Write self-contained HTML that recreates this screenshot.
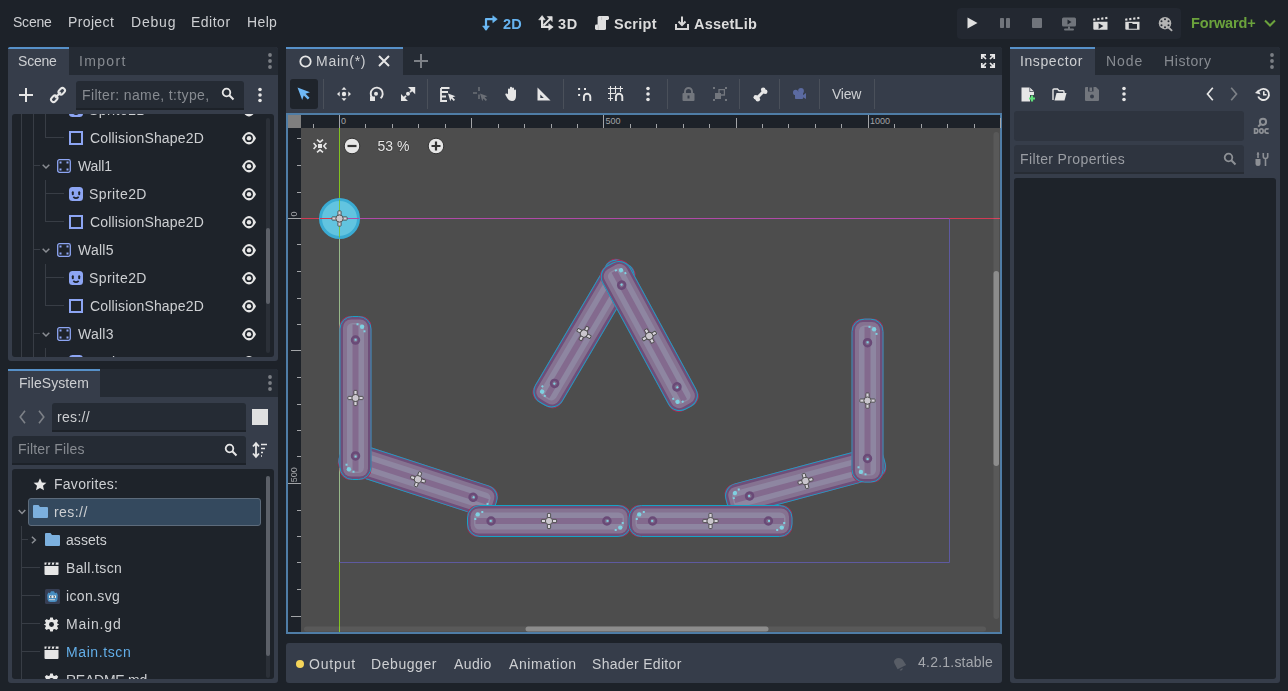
<!DOCTYPE html>
<html><head><meta charset="utf-8">
<style>
*{margin:0;padding:0;box-sizing:border-box}
html,body{width:1288px;height:691px;overflow:hidden;background:#1d2229;font-family:"Liberation Sans",sans-serif;font-size:14px;color:#cdcfd2}
.a{position:absolute}
.t{position:absolute;white-space:nowrap;line-height:1;will-change:transform}
.dim{color:#878b91}
svg{position:absolute;overflow:visible}
</style></head><body>

<!-- ===== top menu ===== -->
<div class="t" style="left:13.30px;top:15.25px;letter-spacing:-0.225px">Scene</div>
<div class="t" style="left:68.30px;top:15.25px;letter-spacing:0.367px">Project</div>
<div class="t" style="left:130.50px;top:15.25px;letter-spacing:0.800px">Debug</div>
<div class="t" style="left:190.50px;top:15.25px;letter-spacing:0.500px">Editor</div>
<div class="t" style="left:246.70px;top:15.25px;letter-spacing:0.367px">Help</div>


<!-- top center buttons -->
<svg style="left:480px;top:13px" width="20" height="20" viewBox="0 0 20 20"><path d="M6 17V6.2H15" fill="none" stroke="#6ab8f4" stroke-width="2.2" stroke-linejoin="round"/><path d="M12.8 2.7L17.3 6.2L12.8 9.7Z M2.6 13L6 17.4L9.4 13Z" fill="#6ab8f4" stroke="#6ab8f4" stroke-width="0.6" stroke-linejoin="round"/></svg>
<div class="t" style="left:502.60px;top:16.73px;font-weight:bold;color:#66b3f0;font-size:14.5px;letter-spacing:0.200px">2D</div>
<svg style="left:536px;top:13px" width="20" height="20" viewBox="0 0 20 20"><path d="M6.1 6V13.9H15" fill="none" stroke="#e0e0e0" stroke-width="2.2"/><path d="M7.5 12.5L14.2 5.8" stroke="#e0e0e0" stroke-width="2"/><path d="M2.7 6.8L6.1 2.6L9.2 6.8Z M12.8 10.7L17.2 14L12.8 17.2Z M11.2 3.6H16.2V8.6Z" fill="#e0e0e0" stroke="#e0e0e0" stroke-width="0.6" stroke-linejoin="round"/></svg>
<div class="t" style="left:558.00px;top:16.73px;font-weight:bold;color:#dcdcdc;font-size:14.5px;letter-spacing:0.700px">3D</div>
<svg style="left:594px;top:15px" width="16" height="16" viewBox="0 0 16 16"><rect x="3.6" y="1" width="8.4" height="14" rx="1.6" fill="#e0e0e0"/><rect x="7" y="1" width="8" height="4" rx="1.4" fill="#e0e0e0"/><rect x="1" y="9.6" width="7" height="5.4" rx="1.4" fill="#e0e0e0"/><path d="M7.6 1.8V5M4.3 10.2V15" stroke="#b8b8b8" stroke-width="0.7"/></svg>
<div class="t" style="left:614.40px;top:16.73px;font-weight:bold;color:#dcdcdc;font-size:14.5px;letter-spacing:0.280px">Script</div>
<svg style="left:674px;top:15px" width="16" height="16" viewBox="0 0 16 16">
 <path d="M2 9V14H14V9" fill="none" stroke="#d6d6d6" stroke-width="2"/>
 <path d="M8 1.5V10M4.5 6.5L8 10L11.5 6.5" fill="none" stroke="#d6d6d6" stroke-width="2"/>
</svg>
<div class="t" style="left:694.00px;top:16.73px;font-weight:bold;color:#dcdcdc;font-size:14.5px;letter-spacing:0.214px">AssetLib</div>

<!-- play panel -->
<div class="a" style="left:957px;top:8px;width:224px;height:31px;background:#232831;border-radius:4px"></div>
<svg style="left:967px;top:17px" width="11" height="12" viewBox="0 0 11 12"><path d="M0.5 0.5L10.5 6L0.5 11.5Z" fill="#e0e0e0"/></svg>
<svg style="left:1000px;top:18px" width="10" height="10" viewBox="0 0 10 10"><rect x="0" y="0" width="4" height="10" rx="0.8" fill="#70747b"/><rect x="6" y="0" width="4" height="10" rx="0.8" fill="#70747b"/></svg>
<svg style="left:1032px;top:18px" width="10" height="10" viewBox="0 0 10 10"><rect x="0" y="0" width="10" height="10" rx="1" fill="#70747b"/></svg>
<svg style="left:1061px;top:17px" width="16" height="14" viewBox="0 0 16 14"><path d="M1 2Q1 0.5 2.5 0.5H13.5Q15 0.5 15 2V8Q15 9.5 13.5 9.5H2.5Q1 9.5 1 8Z" fill="#70747b"/><path d="M6.5 2.5L10.5 5L6.5 7.5Z" fill="#232831"/><rect x="7" y="9.5" width="2" height="2.5" fill="#70747b"/><rect x="3" y="11.5" width="10" height="2" rx="1" fill="#70747b"/></svg>
<svg style="left:1093px;top:16px" width="16" height="15" viewBox="0 0 16 15"><path d="M0.3 5.8H14.5V13.8H1.3Q0.3 13.8 0.3 12.8Z" fill="#dcdcdc"/><g fill="#dcdcdc"><rect x="0.2" y="2.5" width="2.2" height="2.2" transform="rotate(-8 1.3 3.6)"/><rect x="4.2" y="2" width="2.2" height="2.2" transform="rotate(-8 5.3 3.1)"/><rect x="8.2" y="1.5" width="2.2" height="2.2" transform="rotate(-8 9.3 2.6)"/><rect x="12.2" y="1" width="2.2" height="2.2" transform="rotate(-8 13.3 2.1)"/></g><path d="M5.6 7.2L10.4 10.1L5.6 13Z" fill="#232831"/></svg>
<svg style="left:1125px;top:16px" width="16" height="15" viewBox="0 0 16 15"><path d="M0.3 5.8H14.5V13.8H1.3Q0.3 13.8 0.3 12.8Z" fill="#dcdcdc"/><g fill="#dcdcdc"><rect x="0.2" y="2.5" width="2.2" height="2.2" transform="rotate(-8 1.3 3.6)"/><rect x="4.2" y="2" width="2.2" height="2.2" transform="rotate(-8 5.3 3.1)"/><rect x="8.2" y="1.5" width="2.2" height="2.2" transform="rotate(-8 9.3 2.6)"/><rect x="12.2" y="1" width="2.2" height="2.2" transform="rotate(-8 13.3 2.1)"/></g><path d="M3.8 7H7L7.8 8.1H12V12.8H3.8Z" fill="#232831"/></svg>
<svg style="left:1158px;top:16px" width="16" height="16" viewBox="0 0 16 16"><circle cx="7" cy="7.2" r="6.2" fill="#b4b4b4"/><g fill="#232831"><circle cx="7" cy="3.2" r="1"/><circle cx="7" cy="11.2" r="1"/><circle cx="3.5" cy="5.2" r="1"/><circle cx="3.5" cy="9.2" r="1"/><circle cx="10.5" cy="5.2" r="1"/><circle cx="10.5" cy="9.2" r="1"/></g><path d="M10.5 11.5L13.6 14.4" stroke="#b4b4b4" stroke-width="1.8" stroke-linecap="round"/></svg>
<div class="t" style="left:1190.90px;top:15.73px;font-weight:bold;color:#6ba23c;font-size:14.5px;letter-spacing:-0.129px">Forward+</div>
<svg style="left:1264px;top:19px" width="12" height="8" viewBox="0 0 12 8"><path d="M1 1.5L6 6.5L11 1.5" fill="none" stroke="#6ba23c" stroke-width="2"/></svg>

<!-- ===== left top panel (Scene) ===== -->
<div class="a" style="left:8px;top:47px;width:270px;height:314px;background:#363d4a;border-radius:3px"></div>
<div class="a" style="left:69px;top:47px;width:209px;height:28px;background:#252b34;border-top-right-radius:3px"></div>
<div class="a" style="left:8px;top:47px;width:61px;height:2px;background:#5791c9;border-top-left-radius:2px"></div>
<div class="t" style="left:18.10px;top:54.25px;letter-spacing:-0.200px">Scene</div>
<div class="t dim" style="left:79.05px;top:54.25px;letter-spacing:1.330px">Import</div>

<!-- filter -->
<div class="a" style="left:76px;top:81px;width:168px;height:29px;background:#252b34;border-bottom:2px solid #1d2229;border-radius:3px 3px 0 0"></div>
<div class="t dim" style="left:81.70px;top:87.95px;letter-spacing:0.365px">Filter: name, t:type,</div>

<!-- tree -->
<div class="a" style="left:12px;top:114px;width:262px;height:243px;background:#1e232a;border-radius:3px"></div>
<div class="a" style="left:12px;top:114px;width:262px;height:243px;overflow:hidden;border-radius:3px">
<div style="position:absolute;left:-12px;top:-114px;width:300px;height:400px">
<div class="a" style="left:21px;top:114px;width:1px;height:243px;background:#383d45"></div>
<div class="a" style="left:33px;top:114px;width:1px;height:243px;background:#383d45"></div>
<div class="a" style="left:45px;top:109px;width:19px;height:1px;background:#383d45"></div>
<svg style="left:69px;top:103px" width="14" height="14" viewBox="0 0 14 14"><rect x="0" y="0" width="14" height="14" rx="3.5" fill="#8da5f3"/><rect x="2.8" y="4.2" width="2" height="4" rx="1" fill="#1e232a"/><rect x="9.2" y="4.2" width="2" height="4" rx="1" fill="#1e232a"/><path d="M4.3 9.8Q7 12.4 9.7 9.8" fill="none" stroke="#1e232a" stroke-width="1.7"/></svg>
<div class="t " style="left:89.40px;top:103.15px;letter-spacing:0.429px">Sprite2D</div>
<svg style="left:242px;top:104px" width="14" height="13" viewBox="0 0 14 13"><path d="M0 6.2C1.8 2.4 4.3 0 7 0C9.7 0 12.2 2.4 14 6.2C12.2 9.9 9.7 12.4 7 12.4C4.3 12.4 1.8 9.9 0 6.2Z" fill="#e6e6e6"/><circle cx="7" cy="6.2" r="3.9" fill="#1e232a"/><circle cx="7" cy="6.2" r="2.2" fill="#e6e6e6"/></svg>
<div class="a" style="left:45px;top:137px;width:19px;height:1px;background:#383d45"></div>
<svg style="left:69px;top:131px" width="14" height="14" viewBox="0 0 14 14"><rect x="1" y="1" width="12" height="12" fill="none" stroke="#8da5f3" stroke-width="2"/></svg>
<div class="t " style="left:90.40px;top:131.15px;letter-spacing:0.167px">CollisionShape2D</div>
<svg style="left:242px;top:132px" width="14" height="13" viewBox="0 0 14 13"><path d="M0 6.2C1.8 2.4 4.3 0 7 0C9.7 0 12.2 2.4 14 6.2C12.2 9.9 9.7 12.4 7 12.4C4.3 12.4 1.8 9.9 0 6.2Z" fill="#e6e6e6"/><circle cx="7" cy="6.2" r="3.9" fill="#1e232a"/><circle cx="7" cy="6.2" r="2.2" fill="#e6e6e6"/></svg>
<div class="a" style="left:33px;top:165px;width:7px;height:1px;background:#383d45"></div>
<svg style="left:42px;top:164px" width="8" height="5" viewBox="0 0 8 5"><path d="M0.7 0.7L4 4L7.3 0.7" fill="none" stroke="#8a8d93" stroke-width="1.5"/></svg>
<svg style="left:57px;top:159px" width="14" height="14" viewBox="0 0 14 14"><rect x="0.7" y="0.7" width="12.6" height="12.6" rx="1.8" fill="none" stroke="#8da5f3" stroke-width="1.3"/><rect x="2.5" y="2.5" width="2" height="2" fill="#8da5f3"/><rect x="9.5" y="2.5" width="2" height="2" fill="#8da5f3"/><rect x="2.5" y="9.5" width="2" height="2" fill="#8da5f3"/><rect x="9.5" y="9.5" width="2" height="2" fill="#8da5f3"/></svg>
<div class="t " style="left:78.30px;top:159.45px;letter-spacing:-0.125px">Wall1</div>
<div class="a" style="left:45px;top:180px;width:1px;height:42px;background:#383d45"></div>
<svg style="left:242px;top:160px" width="14" height="13" viewBox="0 0 14 13"><path d="M0 6.2C1.8 2.4 4.3 0 7 0C9.7 0 12.2 2.4 14 6.2C12.2 9.9 9.7 12.4 7 12.4C4.3 12.4 1.8 9.9 0 6.2Z" fill="#e6e6e6"/><circle cx="7" cy="6.2" r="3.9" fill="#1e232a"/><circle cx="7" cy="6.2" r="2.2" fill="#e6e6e6"/></svg>
<div class="a" style="left:45px;top:193px;width:19px;height:1px;background:#383d45"></div>
<svg style="left:69px;top:187px" width="14" height="14" viewBox="0 0 14 14"><rect x="0" y="0" width="14" height="14" rx="3.5" fill="#8da5f3"/><rect x="2.8" y="4.2" width="2" height="4" rx="1" fill="#1e232a"/><rect x="9.2" y="4.2" width="2" height="4" rx="1" fill="#1e232a"/><path d="M4.3 9.8Q7 12.4 9.7 9.8" fill="none" stroke="#1e232a" stroke-width="1.7"/></svg>
<div class="t " style="left:89.40px;top:187.15px;letter-spacing:0.429px">Sprite2D</div>
<svg style="left:242px;top:188px" width="14" height="13" viewBox="0 0 14 13"><path d="M0 6.2C1.8 2.4 4.3 0 7 0C9.7 0 12.2 2.4 14 6.2C12.2 9.9 9.7 12.4 7 12.4C4.3 12.4 1.8 9.9 0 6.2Z" fill="#e6e6e6"/><circle cx="7" cy="6.2" r="3.9" fill="#1e232a"/><circle cx="7" cy="6.2" r="2.2" fill="#e6e6e6"/></svg>
<div class="a" style="left:45px;top:221px;width:19px;height:1px;background:#383d45"></div>
<svg style="left:69px;top:215px" width="14" height="14" viewBox="0 0 14 14"><rect x="1" y="1" width="12" height="12" fill="none" stroke="#8da5f3" stroke-width="2"/></svg>
<div class="t " style="left:90.40px;top:215.15px;letter-spacing:0.167px">CollisionShape2D</div>
<svg style="left:242px;top:216px" width="14" height="13" viewBox="0 0 14 13"><path d="M0 6.2C1.8 2.4 4.3 0 7 0C9.7 0 12.2 2.4 14 6.2C12.2 9.9 9.7 12.4 7 12.4C4.3 12.4 1.8 9.9 0 6.2Z" fill="#e6e6e6"/><circle cx="7" cy="6.2" r="3.9" fill="#1e232a"/><circle cx="7" cy="6.2" r="2.2" fill="#e6e6e6"/></svg>
<div class="a" style="left:33px;top:249px;width:7px;height:1px;background:#383d45"></div>
<svg style="left:42px;top:248px" width="8" height="5" viewBox="0 0 8 5"><path d="M0.7 0.7L4 4L7.3 0.7" fill="none" stroke="#8a8d93" stroke-width="1.5"/></svg>
<svg style="left:57px;top:243px" width="14" height="14" viewBox="0 0 14 14"><rect x="0.7" y="0.7" width="12.6" height="12.6" rx="1.8" fill="none" stroke="#8da5f3" stroke-width="1.3"/><rect x="2.5" y="2.5" width="2" height="2" fill="#8da5f3"/><rect x="9.5" y="2.5" width="2" height="2" fill="#8da5f3"/><rect x="2.5" y="9.5" width="2" height="2" fill="#8da5f3"/><rect x="9.5" y="9.5" width="2" height="2" fill="#8da5f3"/></svg>
<div class="t " style="left:78.30px;top:243.45px;letter-spacing:0.250px">Wall5</div>
<div class="a" style="left:45px;top:264px;width:1px;height:42px;background:#383d45"></div>
<svg style="left:242px;top:244px" width="14" height="13" viewBox="0 0 14 13"><path d="M0 6.2C1.8 2.4 4.3 0 7 0C9.7 0 12.2 2.4 14 6.2C12.2 9.9 9.7 12.4 7 12.4C4.3 12.4 1.8 9.9 0 6.2Z" fill="#e6e6e6"/><circle cx="7" cy="6.2" r="3.9" fill="#1e232a"/><circle cx="7" cy="6.2" r="2.2" fill="#e6e6e6"/></svg>
<div class="a" style="left:45px;top:277px;width:19px;height:1px;background:#383d45"></div>
<svg style="left:69px;top:271px" width="14" height="14" viewBox="0 0 14 14"><rect x="0" y="0" width="14" height="14" rx="3.5" fill="#8da5f3"/><rect x="2.8" y="4.2" width="2" height="4" rx="1" fill="#1e232a"/><rect x="9.2" y="4.2" width="2" height="4" rx="1" fill="#1e232a"/><path d="M4.3 9.8Q7 12.4 9.7 9.8" fill="none" stroke="#1e232a" stroke-width="1.7"/></svg>
<div class="t " style="left:89.40px;top:271.15px;letter-spacing:0.429px">Sprite2D</div>
<svg style="left:242px;top:272px" width="14" height="13" viewBox="0 0 14 13"><path d="M0 6.2C1.8 2.4 4.3 0 7 0C9.7 0 12.2 2.4 14 6.2C12.2 9.9 9.7 12.4 7 12.4C4.3 12.4 1.8 9.9 0 6.2Z" fill="#e6e6e6"/><circle cx="7" cy="6.2" r="3.9" fill="#1e232a"/><circle cx="7" cy="6.2" r="2.2" fill="#e6e6e6"/></svg>
<div class="a" style="left:45px;top:305px;width:19px;height:1px;background:#383d45"></div>
<svg style="left:69px;top:299px" width="14" height="14" viewBox="0 0 14 14"><rect x="1" y="1" width="12" height="12" fill="none" stroke="#8da5f3" stroke-width="2"/></svg>
<div class="t " style="left:90.40px;top:299.15px;letter-spacing:0.167px">CollisionShape2D</div>
<svg style="left:242px;top:300px" width="14" height="13" viewBox="0 0 14 13"><path d="M0 6.2C1.8 2.4 4.3 0 7 0C9.7 0 12.2 2.4 14 6.2C12.2 9.9 9.7 12.4 7 12.4C4.3 12.4 1.8 9.9 0 6.2Z" fill="#e6e6e6"/><circle cx="7" cy="6.2" r="3.9" fill="#1e232a"/><circle cx="7" cy="6.2" r="2.2" fill="#e6e6e6"/></svg>
<div class="a" style="left:33px;top:333px;width:7px;height:1px;background:#383d45"></div>
<svg style="left:42px;top:332px" width="8" height="5" viewBox="0 0 8 5"><path d="M0.7 0.7L4 4L7.3 0.7" fill="none" stroke="#8a8d93" stroke-width="1.5"/></svg>
<svg style="left:57px;top:327px" width="14" height="14" viewBox="0 0 14 14"><rect x="0.7" y="0.7" width="12.6" height="12.6" rx="1.8" fill="none" stroke="#8da5f3" stroke-width="1.3"/><rect x="2.5" y="2.5" width="2" height="2" fill="#8da5f3"/><rect x="9.5" y="2.5" width="2" height="2" fill="#8da5f3"/><rect x="2.5" y="9.5" width="2" height="2" fill="#8da5f3"/><rect x="9.5" y="9.5" width="2" height="2" fill="#8da5f3"/></svg>
<div class="t " style="left:78.30px;top:327.45px;letter-spacing:0.250px">Wall3</div>
<div class="a" style="left:45px;top:348px;width:1px;height:42px;background:#383d45"></div>
<svg style="left:242px;top:328px" width="14" height="13" viewBox="0 0 14 13"><path d="M0 6.2C1.8 2.4 4.3 0 7 0C9.7 0 12.2 2.4 14 6.2C12.2 9.9 9.7 12.4 7 12.4C4.3 12.4 1.8 9.9 0 6.2Z" fill="#e6e6e6"/><circle cx="7" cy="6.2" r="3.9" fill="#1e232a"/><circle cx="7" cy="6.2" r="2.2" fill="#e6e6e6"/></svg>
<div class="a" style="left:45px;top:361px;width:19px;height:1px;background:#383d45"></div>
<svg style="left:69px;top:355px" width="14" height="14" viewBox="0 0 14 14"><rect x="0" y="0" width="14" height="14" rx="3.5" fill="#8da5f3"/><rect x="2.8" y="4.2" width="2" height="4" rx="1" fill="#1e232a"/><rect x="9.2" y="4.2" width="2" height="4" rx="1" fill="#1e232a"/><path d="M4.3 9.8Q7 12.4 9.7 9.8" fill="none" stroke="#1e232a" stroke-width="1.7"/></svg>
<div class="t " style="left:89.40px;top:355.15px;letter-spacing:0.429px">Sprite2D</div>
<svg style="left:242px;top:356px" width="14" height="13" viewBox="0 0 14 13"><path d="M0 6.2C1.8 2.4 4.3 0 7 0C9.7 0 12.2 2.4 14 6.2C12.2 9.9 9.7 12.4 7 12.4C4.3 12.4 1.8 9.9 0 6.2Z" fill="#e6e6e6"/><circle cx="7" cy="6.2" r="3.9" fill="#1e232a"/><circle cx="7" cy="6.2" r="2.2" fill="#e6e6e6"/></svg>
<div class="a" style="left:45px;top:114px;width:1px;height:24px;background:#383d45"></div>
<div class="a" style="left:266px;top:118px;width:4px;height:235px;background:#2b3038;border-radius:2px"></div>
<div class="a" style="left:266px;top:228px;width:4px;height:76px;background:#5c6068;border-radius:2px"></div>
</div></div>
<svg style="left:19px;top:88px" width="14" height="14" viewBox="0 0 14 14"><path d="M7 0V14M0 7H14" stroke="#e6e6e6" stroke-width="2"/></svg>
<svg style="left:51px;top:88px" width="14" height="14" viewBox="0 0 14 14"><g transform="translate(7,7) rotate(-45)" fill="none" stroke="#e6e6e6" stroke-width="2"><rect x="-8.8" y="-2.5" width="7" height="5" rx="2.5"/><rect x="1.8" y="-2.5" width="7" height="5" rx="2.5"/><path d="M-4 0H4"/></g></svg>
<svg style="left:221px;top:87px" width="14" height="14" viewBox="0 0 14 14"><circle cx="5.5" cy="5.5" r="3.8" fill="none" stroke="#e6e6e6" stroke-width="1.8"/><path d="M8.3 8.3L12.5 12.5" stroke="#e6e6e6" stroke-width="2"/></svg>
<svg style="left:257px;top:87px" width="6" height="16" viewBox="0 0 6 16"><circle cx="3" cy="2.5" r="1.8" fill="#e6e6e6"/><circle cx="3" cy="8" r="1.8" fill="#e6e6e6"/><circle cx="3" cy="13.5" r="1.8" fill="#e6e6e6"/></svg>
<svg style="left:267px;top:53px" width="6" height="16" viewBox="0 0 6 16"><circle cx="3" cy="2" r="1.9" fill="#7a7e84"/><circle cx="3" cy="8" r="1.9" fill="#7a7e84"/><circle cx="3" cy="14" r="1.9" fill="#7a7e84"/></svg>


<!-- ===== left bottom panel (FileSystem) ===== -->
<div class="a" style="left:8px;top:369px;width:270px;height:314px;background:#363d4a;border-radius:3px"></div>
<div class="a" style="left:100px;top:369px;width:178px;height:28px;background:#252b34;border-top-right-radius:3px"></div>
<div class="a" style="left:8px;top:369px;width:92px;height:2px;background:#5791c9"></div>
<div class="t" style="left:18.60px;top:375.95px;letter-spacing:0.067px">FileSystem</div>
<div class="a" style="left:52px;top:403px;width:194px;height:29px;background:#252b34;border-bottom:2px solid #1d2229;border-radius:3px 3px 0 0"></div>
<div class="t" style="left:57.20px;top:409.55px;letter-spacing:0.320px">res://</div>
<div class="a" style="left:252px;top:409px;width:16px;height:16px;background:#e0e0e0"></div>
<div class="a" style="left:12px;top:436px;width:234px;height:29px;background:#252b34;border-bottom:2px solid #1d2229;border-radius:3px 3px 0 0"></div>
<div class="t dim" style="left:17.50px;top:442.15px;letter-spacing:0.173px">Filter Files</div>
<div class="a" style="left:12px;top:469px;width:262px;height:210px;background:#1e232a;border-radius:3px"></div>
<div class="a" style="left:12px;top:469px;width:262px;height:210px;overflow:hidden;border-radius:3px">
<div style="position:absolute;left:-12px;top:-469px;width:300px;height:700px">
<svg style="left:33px;top:478px" width="14" height="13" viewBox="0 0 14 13"><path d="M7 0.3L8.9 4.4L13.4 4.8L10 7.8L11 12.3L7 9.9L3 12.3L4 7.8L0.6 4.8L5.1 4.4Z" fill="#e6e6e6"/></svg>
<div class="t" style="left:53.60px;top:477.45px;letter-spacing:0.267px">Favorites:</div>
<div class="a" style="left:28px;top:498px;width:233px;height:28px;background:#34495e;border:1px solid #5d6b7b;border-radius:3px"></div>
<svg style="left:18px;top:509px" width="8" height="6" viewBox="0 0 8 6"><path d="M0.7 0.9L4 4.4L7.3 0.9" fill="none" stroke="#8a8d93" stroke-width="1.5"/></svg>
<svg style="left:33px;top:505px" width="15" height="13" viewBox="0 0 15 13"><path d="M0 1Q0 0 1 0H5.5L7 2H14Q15 2 15 3V12Q15 13 14 13H1Q0 13 0 12Z" fill="#7cb0de"/></svg>
<div class="t" style="left:53.60px;top:504.75px;letter-spacing:0.440px">res://</div>
<div class="a" style="left:21px;top:526px;width:1px;height:160px;background:#383d45"></div>
<div class="a" style="left:22px;top:539px;width:6px;height:1px;background:#383d45"></div>
<svg style="left:31px;top:536px" width="6" height="8" viewBox="0 0 6 8"><path d="M0.9 0.7L4.4 4L0.9 7.3" fill="none" stroke="#8a8d93" stroke-width="1.5"/></svg>
<svg style="left:45px;top:533px" width="15" height="13" viewBox="0 0 15 13"><path d="M0 1Q0 0 1 0H5.5L7 2H14Q15 2 15 3V12Q15 13 14 13H1Q0 13 0 12Z" fill="#7cb0de"/></svg>
<div class="t" style="left:66.30px;top:533.05px;letter-spacing:0.060px">assets</div>
<div class="a" style="left:22px;top:567px;width:18px;height:1px;background:#383d45"></div>
<svg style="left:44px;top:561px" width="15" height="14" viewBox="0 0 15 14"><path d="M0.5 5H14.5V13Q14.5 14 13.5 14H1.5Q0.5 14 0.5 13Z" fill="#e6e6e6"/><path d="M0.5 1.5H14.5V3.8H0.5Z" fill="#e6e6e6"/><path d="M2.7 1.3H4.4L3.9 4H2.2Z M6.5 1.3H8.2L7.7 4H6Z M10.3 1.3H12L11.5 4H9.8Z" fill="#1e232a"/></svg>
<div class="t" style="left:65.50px;top:561.15px;letter-spacing:0.363px">Ball.tscn</div>
<div class="a" style="left:22px;top:595px;width:18px;height:1px;background:#383d45"></div>
<svg style="left:45px;top:589px" width="15" height="15" viewBox="0 0 15 15"><rect x="0" y="0" width="15" height="15" rx="1.5" fill="#363e54"/><path d="M2.2 6L3.3 3.5L5 4.2L6 2.2H9L10 4.2L11.7 3.5L12.8 6L12.5 10.5Q12 13 9.5 13H5.5Q3 13 2.5 10.5Z" fill="#478cbf"/><rect x="4" y="6.5" width="2.6" height="2.4" fill="#f0f0f0"/><rect x="8.4" y="6.5" width="2.6" height="2.4" fill="#f0f0f0"/><rect x="5" y="7.3" width="1.2" height="1.2" fill="#333"/><rect x="8.8" y="7.3" width="1.2" height="1.2" fill="#333"/><rect x="7" y="6.3" width="1" height="2.8" fill="#f0f0f0"/><rect x="4.3" y="10" width="1.4" height="1.2" fill="#e0e0e0"/><rect x="6.3" y="10" width="1.4" height="1.2" fill="#e0e0e0"/><rect x="8.3" y="10" width="1.4" height="1.2" fill="#e0e0e0"/></svg>
<div class="t" style="left:65.50px;top:589.15px;letter-spacing:0.357px">icon.svg</div>
<div class="a" style="left:22px;top:623px;width:18px;height:1px;background:#383d45"></div>
<svg style="left:44px;top:617px" width="15" height="15" viewBox="0 0 16 16"><path d="M6.6 0.5H9.4L9.8 2.6L11.4 3.3L13.2 2.1L15.2 4.1L14 5.9L14.6 7.5L16 7.8V8.2L14.6 8.5L14 10.1L15.2 11.9L13.2 13.9L11.4 12.7L9.8 13.4L9.4 15.5H6.6L6.2 13.4L4.6 12.7L2.8 13.9L0.8 11.9L2 10.1L1.4 8.5L0 8.2V7.8L1.4 7.5L2 5.9L0.8 4.1L2.8 2.1L4.6 3.3L6.2 2.6Z" fill="#e6e6e6"/><circle cx="8" cy="8" r="2.6" fill="#1e232a"/></svg>
<div class="t" style="left:65.50px;top:617.15px;letter-spacing:0.817px">Main.gd</div>
<div class="a" style="left:22px;top:651px;width:18px;height:1px;background:#383d45"></div>
<svg style="left:44px;top:645px" width="15" height="14" viewBox="0 0 15 14"><path d="M0.5 5H14.5V13Q14.5 14 13.5 14H1.5Q0.5 14 0.5 13Z" fill="#e6e6e6"/><path d="M0.5 1.5H14.5V3.8H0.5Z" fill="#e6e6e6"/><path d="M2.7 1.3H4.4L3.9 4H2.2Z M6.5 1.3H8.2L7.7 4H6Z M10.3 1.3H12L11.5 4H9.8Z" fill="#1e232a"/></svg>
<div class="t" style="left:65.50px;top:645.15px;color:#63aee8;letter-spacing:0.600px">Main.tscn</div>
<div class="a" style="left:22px;top:679px;width:18px;height:1px;background:#383d45"></div>
<svg style="left:44px;top:673px" width="15" height="15" viewBox="0 0 16 16"><path d="M6.6 0.5H9.4L9.8 2.6L11.4 3.3L13.2 2.1L15.2 4.1L14 5.9L14.6 7.5L16 7.8V8.2L14.6 8.5L14 10.1L15.2 11.9L13.2 13.9L11.4 12.7L9.8 13.4L9.4 15.5H6.6L6.2 13.4L4.6 12.7L2.8 13.9L0.8 11.9L2 10.1L1.4 8.5L0 8.2V7.8L1.4 7.5L2 5.9L0.8 4.1L2.8 2.1L4.6 3.3L6.2 2.6Z" fill="#e6e6e6"/><circle cx="8" cy="8" r="2.6" fill="#1e232a"/></svg>
<div class="t" style="left:65.50px;top:673.15px;letter-spacing:-0.238px">README.md</div>
<div class="a" style="left:266px;top:476px;width:4px;height:202px;background:#2b3038;border-radius:2px"></div>
<div class="a" style="left:266px;top:476px;width:4px;height:180px;background:#5c6068;border-radius:2px"></div>
</div></div>
<svg style="left:19px;top:410px" width="7" height="14" viewBox="0 0 7 14"><path d="M6 0.8L1.2 7L6 13.2" fill="none" stroke="#7d8187" stroke-width="1.6"/></svg>
<svg style="left:38px;top:410px" width="7" height="14" viewBox="0 0 7 14"><path d="M1 0.8L5.8 7L1 13.2" fill="none" stroke="#7d8187" stroke-width="1.6"/></svg>
<svg style="left:224px;top:443px" width="14" height="14" viewBox="0 0 14 14"><circle cx="5.5" cy="5.5" r="3.8" fill="none" stroke="#e6e6e6" stroke-width="1.8"/><path d="M8.3 8.3L12.5 12.5" stroke="#e6e6e6" stroke-width="2"/></svg>
<svg style="left:252px;top:442px" width="16" height="16" viewBox="0 0 16 16"><path d="M4 1.5V14.5M1 4.5L4 1.2L7 4.5M1 11.5L4 14.8L7 11.5" fill="none" stroke="#e6e6e6" stroke-width="1.8"/><path d="M9 2.5H15M9 6.5H13M9 10.5H11M9 14H10" stroke="#e6e6e6" stroke-width="1.6"/></svg>
<svg style="left:267px;top:375px" width="6" height="16" viewBox="0 0 6 16"><circle cx="3" cy="2" r="1.9" fill="#7a7e84"/><circle cx="3" cy="8" r="1.9" fill="#7a7e84"/><circle cx="3" cy="14" r="1.9" fill="#7a7e84"/></svg>


<!-- ===== center panel ===== -->
<div class="a" style="left:286px;top:47px;width:716px;height:66px;background:#363d4a;border-radius:3px 3px 0 0"></div>
<div class="a" style="left:403px;top:47px;width:599px;height:28px;background:#252b34;border-top-right-radius:3px"></div>
<div class="a" style="left:286px;top:47px;width:117px;height:2px;background:#5791c9"></div>
<div class="t" style="left:316.40px;top:54.05px;letter-spacing:0.733px">Main(*)</div>

<!-- viewport -->
<div class="a" style="left:286px;top:113px;width:716px;height:521px;border:2px solid #4f7da6;background:#4d4d4d"></div>

<!-- bottom panel -->
<div class="a" style="left:286px;top:643px;width:716px;height:40px;background:#363d4a;border-radius:3px"></div>

<!-- CENTER START -->

<svg style="left:299px;top:55px" width="13" height="13" viewBox="0 0 13 13"><circle cx="6.5" cy="6.5" r="5.2" fill="none" stroke="#e6e6e6" stroke-width="1.8"/></svg>
<svg style="left:378px;top:55px" width="12" height="12" viewBox="0 0 12 12"><path d="M1 1L11 11M11 1L1 11" stroke="#e6e6e6" stroke-width="2"/></svg>
<svg style="left:414px;top:54px" width="14" height="14" viewBox="0 0 14 14"><path d="M7 0V14M0 7H14" stroke="#7d8187" stroke-width="2"/></svg>
<svg style="left:981px;top:54px" width="14" height="14" viewBox="0 0 14 14"><path d="M0.8 5V0.8H5M0.8 0.8L5 5M13.2 5V0.8H9M13.2 0.8L9 5M0.8 9V13.2H5M0.8 13.2L5 9M13.2 9V13.2H9M13.2 13.2L9 9" fill="none" stroke="#e6e6e6" stroke-width="1.7"/></svg>

<div class="a" style="left:290px;top:79px;width:28px;height:30px;background:#1f242b;border-radius:3px"></div>
<div class="a" style="left:323px;top:79px;width:1px;height:30px;background:#4a505a"></div>
<div class="a" style="left:427px;top:79px;width:1px;height:30px;background:#4a505a"></div>
<div class="a" style="left:563px;top:79px;width:1px;height:30px;background:#4a505a"></div>
<div class="a" style="left:667px;top:79px;width:1px;height:30px;background:#4a505a"></div>
<div class="a" style="left:739px;top:79px;width:1px;height:30px;background:#4a505a"></div>
<div class="a" style="left:779px;top:79px;width:1px;height:30px;background:#4a505a"></div>
<div class="a" style="left:819px;top:79px;width:1px;height:30px;background:#4a505a"></div>
<div class="a" style="left:874px;top:79px;width:1px;height:30px;background:#4a505a"></div>

<svg style="left:297px;top:87px" width="14" height="14" viewBox="0 0 14 14"><path d="M0.5 0.5L13 5.2L8.5 6.8L12.5 10.8L10.8 12.5L6.8 8.5L5.2 13Z" fill="#6fb8f6"/></svg>
<svg style="left:337px;top:87px" width="14" height="14" viewBox="0 0 14 14"><path d="M7 0L9.5 2.7H4.5Z M7 14L9.5 11.3H4.5Z M0 7L2.7 4.5V9.5Z M14 7L11.3 4.5V9.5Z" fill="#e6e6e6"/><circle cx="7" cy="7" r="2.2" fill="#e6e6e6"/></svg>
<svg style="left:369px;top:86px" width="16" height="16" viewBox="0 0 16 16"><path d="M3.2 11.6A6 6 0 1 1 11.6 12.2" fill="none" stroke="#e6e6e6" stroke-width="1.9"/><path d="M1 10.5L6 10.5L6 15L1 15Z" fill="#e6e6e6" transform="rotate(0)"/><circle cx="7" cy="7.8" r="2" fill="#e6e6e6"/></svg>
<svg style="left:400px;top:86px" width="16" height="16" viewBox="0 0 16 16"><path d="M8 1H15.2V8.2Z M1 8V15H8Z" fill="#e6e6e6"/><path d="M12 4.2L10 6.2M4 11.8L6 9.8" stroke="#e6e6e6" stroke-width="1.8"/><circle cx="8" cy="7.8" r="2" fill="#e6e6e6"/></svg>
<svg style="left:440px;top:87px" width="16" height="15" viewBox="0 0 16 15"><path d="M1 1H9.5M1 1V14H7M1 5H8M1 9.5H6" fill="none" stroke="#e6e6e6" stroke-width="1.8"/><path d="M8 6.5L15.5 9.3L12.6 10.3L15 12.7L13.8 14L11.3 11.5L10.3 14.3Z" fill="#e6e6e6"/></svg>
<svg style="left:473px;top:87px" width="15" height="15" viewBox="0 0 15 15"><path d="M6 0V4M6 7.5V12M0 6H4" stroke="#6b6f76" stroke-width="1.6"/><path d="M7 6.5L14.5 9.3L11.6 10.3L14 12.7L12.8 14L10.3 11.5L9.3 14.3Z" fill="#6b6f76"/></svg>
<svg style="left:505px;top:86px" width="14" height="16" viewBox="0 0 14 16"><path d="M3 7V3.5Q3 2.5 4 2.5Q5 2.5 5 3.5V7V1.8Q5 0.8 6 0.8Q7 0.8 7 1.8V7V2.5Q7 1.5 8 1.5Q9 1.5 9 2.5V7.5V4.5Q9 3.5 10 3.5Q11 3.5 11 4.5V10Q11 15 7 15Q4 15 2.5 12.5L0.5 9Q0 8 1 7.6Q2 7.2 2.8 8.3Z" fill="#e6e6e6"/></svg>
<svg style="left:537px;top:87px" width="14" height="14" viewBox="0 0 14 14"><path d="M0.5 0.5L13.5 13.5H0.5Z" fill="#e6e6e6"/><path d="M3.3 7.5L6.8 11H3.3Z" fill="#363d4a"/></svg>
<svg style="left:578px;top:86px" width="15" height="16" viewBox="0 0 15 16"><rect x="0.1" y="2" width="2" height="2" fill="#e6e6e6"/><rect x="6" y="2" width="2" height="2" fill="#e6e6e6"/><rect x="0.1" y="8" width="2" height="2" fill="#e6e6e6"/><path d="M5.9 15V11A3.2 3.2 0 0 1 12.3 11V15" fill="none" stroke="#e6e6e6" stroke-width="1.9"/></svg>
<svg style="left:607px;top:85px" width="17" height="17" viewBox="0 0 17 17"><path d="M3.5 1V16M8.5 1V8.5M13.5 1V7M1 3.5H16M1 8.5H8.5M1 13.5H6" stroke="#e6e6e6" stroke-width="1.1"/><path d="M8.9 16V12A3.2 3.2 0 0 1 15.3 12V16" fill="none" stroke="#e6e6e6" stroke-width="1.9"/></svg>
<svg style="left:645px;top:86px" width="6" height="16" viewBox="0 0 6 16"><circle cx="3" cy="2.5" r="1.8" fill="#e6e6e6"/><circle cx="3" cy="8" r="1.8" fill="#e6e6e6"/><circle cx="3" cy="13.5" r="1.8" fill="#e6e6e6"/></svg>
<svg style="left:682px;top:87px" width="13" height="14" viewBox="0 0 13 14"><path d="M3 6.5V4.5A3.5 3.5 0 0 1 10 4.5V6.5" fill="none" stroke="#72767d" stroke-width="1.9"/><rect x="0.5" y="6" width="12" height="8" rx="1" fill="#72767d"/><rect x="5.5" y="8.5" width="2" height="3" fill="#363d4a"/></svg>
<svg style="left:713px;top:87px" width="14" height="14" viewBox="0 0 14 14"><rect x="0" y="0" width="2" height="2" fill="#72767d"/><rect x="12" y="12" width="2" height="2" fill="#72767d"/><rect x="0" y="12" width="2" height="2" fill="#72767d"/><rect x="2" y="6" width="6" height="6" fill="#72767d"/><path d="M6 6V2.6H11.4V8H8" fill="none" stroke="#72767d" stroke-width="1.3"/><rect x="12" y="0" width="2" height="2" fill="#72767d"/></svg>
<svg style="left:753px;top:87px" width="15" height="15" viewBox="0 0 15 15"><path d="M4 11L11 4" stroke="#e6e6e6" stroke-width="3"/><circle cx="2.8" cy="10.2" r="2.3" fill="#e6e6e6"/><circle cx="4.8" cy="12.2" r="2.3" fill="#e6e6e6"/><circle cx="10.2" cy="2.8" r="2.3" fill="#e6e6e6"/><circle cx="12.2" cy="4.8" r="2.3" fill="#e6e6e6"/></svg>
<svg style="left:793px;top:88px" width="14" height="12" viewBox="0 0 14 12"><circle cx="2.6" cy="4.4" r="2.6" fill="#5b6aa0"/><circle cx="8" cy="2.9" r="2.9" fill="#5b6aa0"/><rect x="2" y="4" width="8" height="7" rx="0.8" fill="#5b6aa0"/><path d="M9.5 7.5L13 5V11L9.5 9Z" fill="#5b6aa0"/></svg>
<div class="t" style="left:832.20px;top:86.95px;letter-spacing:-0.267px">View</div>

<svg style="left:0;top:0" width="1288" height="691" viewBox="0 0 1288 691">
<defs><clipPath id="vp"><rect x="301" y="128" width="699" height="504"/></clipPath>
<g id="wall">
 <rect x="-81.5" y="-15.5" width="163" height="31" rx="10" fill="#6e4e79" stroke="#b02a58" stroke-width="0.9"/>
 <rect x="-78.5" y="-12.5" width="157" height="25" rx="8" fill="#857291"/>
 <rect x="-75" y="-8.5" width="150" height="17" rx="5.5" fill="#8e86a1"/>
 <rect x="-73.5" y="-3" width="147" height="6" fill="#836a8e"/>
 <circle cx="-57.9" cy="0" r="3.5" fill="#7e6a8a" stroke="#6a4a77" stroke-width="2.5"/>
 <circle cx="57.9" cy="0" r="3.5" fill="#7e6a8a" stroke="#6a4a77" stroke-width="2.5"/>
 <rect x="-59.3" y="-1.1" width="2" height="2" fill="#7fd0e0"/>
 <rect x="57.5" y="-1.1" width="2" height="2" fill="#7fd0e0"/>
 <circle cx="-71.3" cy="-6.6" r="2.2" fill="#7fd0e0"/><rect x="-67.7" y="-10" width="2" height="2" fill="#7fd0e0"/><rect x="-74.7" y="-3" width="2" height="2" fill="#7fd0e0"/>
 <circle cx="71.3" cy="6.6" r="2.2" fill="#7fd0e0"/><rect x="65.7" y="8" width="2" height="2" fill="#7fd0e0"/><rect x="72.7" y="1" width="2" height="2" fill="#7fd0e0"/>
 <rect x="-81.5" y="-15.5" width="163" height="31" rx="12.5" fill="none" stroke="#17a3c6" stroke-width="1"/>
</g>
<g id="piv">
 <rect x="-1.6" y="-7.6" width="3.2" height="4.4" rx="0.6" fill="#d8d4dc" stroke="#4a4a4a" stroke-width="0.9"/>
 <rect x="-1.6" y="3.2" width="3.2" height="4.4" rx="0.6" fill="#d8d4dc" stroke="#4a4a4a" stroke-width="0.9"/>
 <rect x="-7.6" y="-1.6" width="4.4" height="3.2" rx="0.6" fill="#d8d4dc" stroke="#4a4a4a" stroke-width="0.9"/>
 <rect x="3.2" y="-1.6" width="4.4" height="3.2" rx="0.6" fill="#d8d4dc" stroke="#4a4a4a" stroke-width="0.9"/>
 <circle cx="0" cy="0" r="3.6" fill="#cac6cd" stroke="#4a4a4a" stroke-width="0.9"/>
</g>
</defs>
<rect x="288" y="115" width="712" height="13" fill="#1d2229"/>
<rect x="288" y="128" width="13" height="504" fill="#1d2229"/>
<rect x="288" y="115" width="13" height="13" fill="#7f7f7f"/>
<path d="M313.5 124V128 M339.5 115V128 M365.5 124V128 M392.5 124V128 M418.5 124V128 M445.5 124V128 M471.5 118V128 M498.5 124V128 M524.5 124V128 M551.5 124V128 M577.5 124V128 M603.5 115V128 M630.5 124V128 M656.5 124V128 M683.5 124V128 M709.5 124V128 M736.5 118V128 M762.5 124V128 M788.5 124V128 M815.5 124V128 M841.5 124V128 M868.5 115V128 M894.5 124V128 M921.5 124V128 M947.5 124V128 M974.5 124V128 M1000.5 118V128 M297 138.5H301 M297 165.5H301 M297 192.5H301 M288 218.5H301 M297 244.5H301 M297 271.5H301 M297 298.5H301 M297 324.5H301 M291 350.5H301 M297 377.5H301 M297 404.5H301 M297 430.5H301 M297 456.5H301 M288 483.5H301 M297 510.5H301 M297 536.5H301 M297 562.5H301 M297 589.5H301 M291 616.5H301" stroke="#a3a5a8" stroke-width="1"/>
<g font-family="Liberation Sans" font-size="9" fill="#a3a5a8">
<text x="341" y="123.9">0</text><text x="605.5" y="123.9">500</text><text x="870" y="123.9">1000</text>
<text transform="translate(297,216.5) rotate(-90)">0</text>
<text transform="translate(297,482.2) rotate(-90)">500</text>
</g>
<g clip-path="url(#vp)">
<path d="M949.5 218V562.5H339" fill="none" stroke="#5e5aa0" stroke-width="1"/>
<path d="M301 218.5H339M949 218.5H1000" stroke="#d23a55" stroke-width="1"/>
<path d="M339 218.5H949" stroke="#b04aa8" stroke-width="1"/>
<path d="M339.5 128V218M339.5 562V632" stroke="#82c21f" stroke-width="1"/>
<path d="M339.5 218V562" stroke="#98b98a" stroke-width="1"/>
<use href="#wall" transform="translate(418,479.3) rotate(18)"/>
<use href="#wall" transform="translate(355.5,398) rotate(90)"/>
<use href="#wall" transform="translate(549,521) rotate(0)"/>
<use href="#wall" transform="translate(805.5,481) rotate(-15)"/>
<use href="#wall" transform="translate(710.5,521) rotate(0)"/>
<use href="#wall" transform="translate(867.5,400.6) rotate(90)"/>
<use href="#wall" transform="translate(584,333.5) rotate(-59.5)"/>
<use href="#wall" transform="translate(649.3,336) rotate(61.5)"/>
<use href="#piv" transform="translate(418,479.3) rotate(18)"/>
<use href="#piv" transform="translate(355.5,398) rotate(90)"/>
<use href="#piv" transform="translate(549,521) rotate(0)"/>
<use href="#piv" transform="translate(805.5,481) rotate(-15)"/>
<use href="#piv" transform="translate(710.5,521) rotate(0)"/>
<use href="#piv" transform="translate(867.5,400.6) rotate(90)"/>
<use href="#piv" transform="translate(584,333.5) rotate(-59.5)"/>
<use href="#piv" transform="translate(649.3,336) rotate(61.5)"/>
<circle cx="339.5" cy="218.5" r="19" fill="#62c4e0" stroke="#3aabd3" stroke-width="3"/>
<path d="M339.5 199.5V218M339.5 218V237.5" stroke="#82c21f" stroke-width="1" opacity="0.8"/>
<path d="M320 218.5H339" stroke="#d23a55" stroke-width="1"/><path d="M339 218.5H359" stroke="#b04aa8" stroke-width="1"/>
<use href="#piv" transform="translate(339.5,218.5)"/>
<rect x="993.5" y="132" width="5.5" height="487" rx="2.75" fill="#ffffff" fill-opacity="0.07"/>
<rect x="993.5" y="271" width="5.5" height="195" rx="2.75" fill="#8c8c8c"/>
<rect x="304" y="626.5" width="682" height="5" rx="2.5" fill="#ffffff" fill-opacity="0.07"/>
<rect x="525.5" y="626.5" width="243" height="5" rx="2.5" fill="#8c8c8c"/>
</g>

<rect x="318" y="144" width="4" height="4" fill="#e6e6e6"/>
<path d="M317 139.6L320 142.2L323 139.6M317 152.4L320 149.8L323 152.4M313.6 143L316.2 146L313.6 149M326.4 143L323.8 146L326.4 149" fill="none" stroke="#e6e6e6" stroke-width="1.6"/>
<circle cx="352" cy="146" r="7.8" fill="#e6e6e6" stroke="#333" stroke-width="1"/>
<path d="M347.5 146H356.5" stroke="#333" stroke-width="2.2"/>
<circle cx="436" cy="146" r="7.8" fill="#e6e6e6" stroke="#333" stroke-width="1"/>
<path d="M431.5 146H440.5M436 141.5V150.5" stroke="#333" stroke-width="2.2"/>
<text x="377.5" y="151" font-family="Liberation Sans" font-size="14" fill="#e6e6e6" stroke="#3a3a3a" stroke-width="1.2" paint-order="stroke">53 %</text>

</svg>

<svg style="left:296px;top:660px" width="8" height="8" viewBox="0 0 8 8"><circle cx="4" cy="4" r="4" fill="#f5d55a"/></svg>
<div class="t" style="left:308.70px;top:657.15px;letter-spacing:0.840px">Output</div>
<div class="t" style="left:370.80px;top:657.15px;letter-spacing:0.571px">Debugger</div>
<div class="t" style="left:454.40px;top:657.15px;letter-spacing:0.400px">Audio</div>
<div class="t" style="left:509.20px;top:657.15px;letter-spacing:0.600px">Animation</div>
<div class="t" style="left:592.00px;top:657.15px;letter-spacing:0.308px">Shader Editor</div>
<svg style="left:893px;top:657px" width="14" height="14" viewBox="0 0 14 14"><path d="M3 11L2 4Q2 1 6 0.5Q10 1 11 4L12.5 10Z M8 11.5Q8 13.5 6 13.5Q5 13.5 4.5 12.5" fill="#585d66" transform="rotate(-20 7 7)"/></svg>
<div class="t" style="left:918.00px;top:654.95px;color:#a5a8ad;letter-spacing:0.227px">4.2.1.stable</div>

<!-- CENTER END -->
<!-- ===== inspector ===== -->
<div class="a" style="left:1010px;top:47px;width:270px;height:636px;background:#363d4a;border-radius:3px"></div>
<div class="a" style="left:1095px;top:47px;width:185px;height:28px;background:#252b34;border-top-right-radius:3px"></div>
<div class="a" style="left:1010px;top:47px;width:85px;height:2px;background:#5791c9"></div>
<div class="t" style="left:1020.00px;top:54.15px;letter-spacing:0.588px">Inspector</div>
<div class="t dim" style="left:1105.60px;top:54.15px;letter-spacing:0.900px">Node</div>
<div class="t dim" style="left:1163.70px;top:54.15px;letter-spacing:0.583px">History</div>
<div class="a" style="left:1014px;top:111px;width:230px;height:30px;background:#2e343f;border-radius:3px"></div>
<div class="a" style="left:1014px;top:145px;width:230px;height:29px;background:#2e343f;border-bottom:2px solid #272c34;border-radius:3px 3px 0 0"></div>
<div class="t dim" style="left:1019.50px;top:151.95px;color:#9a9da3;letter-spacing:0.369px">Filter Properties</div>
<div class="a" style="left:1014px;top:178px;width:262px;height:501px;background:#1e232a;border-radius:3px"></div>

<!-- INSPECTOR ICONS -->
<svg style="left:1021px;top:87px" width="15" height="15" viewBox="0 0 15 15"><path d="M0.5 0.5H8.5L13 5V8H9V14.5H0.5Z" fill="#e6e6e6"/><path d="M8.5 0.5V5H13" fill="#363d4a"/><path d="M9.2 0.8L12.7 4.3H9.2Z" fill="#e6e6e6"/><path d="M11 8.5V14.5M8 11.5H14" stroke="#5fe07a" stroke-width="2.2"/></svg>
<svg style="left:1052px;top:88px" width="15" height="13" viewBox="0 0 15 13"><path d="M1 12V2Q1 1 2 1H5.5L7 2.8H11Q12 2.8 12 3.8V5" fill="none" stroke="#e6e6e6" stroke-width="1.4"/><path d="M2.5 12.5L4.5 5H14.5L12.5 12.5Z" fill="#e6e6e6"/></svg>
<svg style="left:1085px;top:87px" width="14" height="14" viewBox="0 0 14 14"><path d="M0 1Q0 0 1 0H11L14 3V13Q14 14 13 14H1Q0 14 0 13Z" fill="#72767d"/><rect x="3" y="0" width="5.5" height="4.5" fill="#363d4a"/><rect x="4.5" y="0.5" width="2.5" height="3.5" fill="#72767d"/><circle cx="7" cy="9.5" r="2" fill="#363d4a"/></svg>
<svg style="left:1121px;top:86px" width="6" height="16" viewBox="0 0 6 16"><circle cx="3" cy="2.5" r="1.8" fill="#e6e6e6"/><circle cx="3" cy="8" r="1.8" fill="#e6e6e6"/><circle cx="3" cy="13.5" r="1.8" fill="#e6e6e6"/></svg>
<svg style="left:1206px;top:87px" width="8" height="14" viewBox="0 0 8 14"><path d="M6.8 0.8L1.5 7L6.8 13.2" fill="none" stroke="#e6e6e6" stroke-width="1.7"/></svg>
<svg style="left:1230px;top:87px" width="8" height="14" viewBox="0 0 8 14"><path d="M1.2 0.8L6.5 7L1.2 13.2" fill="none" stroke="#7d8187" stroke-width="1.7"/></svg>
<svg style="left:1255px;top:88px" width="15" height="13" viewBox="0 0 15 13"><path d="M3.2 8.5A5.6 5.6 0 1 0 4 3" fill="none" stroke="#e6e6e6" stroke-width="1.9"/><path d="M0 5L3.5 1.5L5.5 6.5Z" fill="#e6e6e6"/><path d="M8.8 3.2V6.8H11.5" fill="none" stroke="#e6e6e6" stroke-width="1.6"/></svg>
<svg style="left:1253px;top:117px" width="17" height="18" viewBox="0 0 17 18"><g fill="none" stroke="#8d9095"><circle cx="10" cy="4.8" r="3.1" stroke-width="2"/><path d="M7.6 7.2L5.2 9.6" stroke-width="2"/><path d="M1.6 11.8V16.2H3Q4.8 16.2 4.8 14Q4.8 11.8 3 11.8Z" stroke-width="1.7"/><ellipse cx="8.4" cy="14" rx="1.75" ry="2.2" stroke-width="1.7"/><path d="M15.6 12.2Q15 11.8 14 11.8Q12 11.8 12 14Q12 16.2 14 16.2Q15 16.2 15.6 15.8" stroke-width="1.7"/></g></svg>
<svg style="left:1223px;top:152px" width="14" height="14" viewBox="0 0 14 14"><circle cx="5.5" cy="5.5" r="3.8" fill="none" stroke="#8d9095" stroke-width="1.8"/><path d="M8.3 8.3L12.5 12.5" stroke="#8d9095" stroke-width="2"/></svg>
<svg style="left:1255px;top:152px" width="14" height="14" viewBox="0 0 14 14"><path d="M3 0.5V6" stroke="#8d9095" stroke-width="1.6"/><path d="M1.5 2.5L3 0L4.5 2.5Z" fill="#8d9095"/><path d="M0.5 7H5.5V11.5Q5.5 14 3 14Q0.5 14 0.5 11.5Z" fill="#8d9095"/><path d="M10.5 14V6.5M8.3 1V4.5Q8.3 6.5 10.5 6.5Q12.7 6.5 12.7 4.5V1" fill="none" stroke="#8d9095" stroke-width="1.6"/></svg>
<svg style="left:1269px;top:53px" width="6" height="16" viewBox="0 0 6 16"><circle cx="3" cy="2" r="1.9" fill="#7a7e84"/><circle cx="3" cy="8" r="1.9" fill="#7a7e84"/><circle cx="3" cy="14" r="1.9" fill="#7a7e84"/></svg>

</body></html>
